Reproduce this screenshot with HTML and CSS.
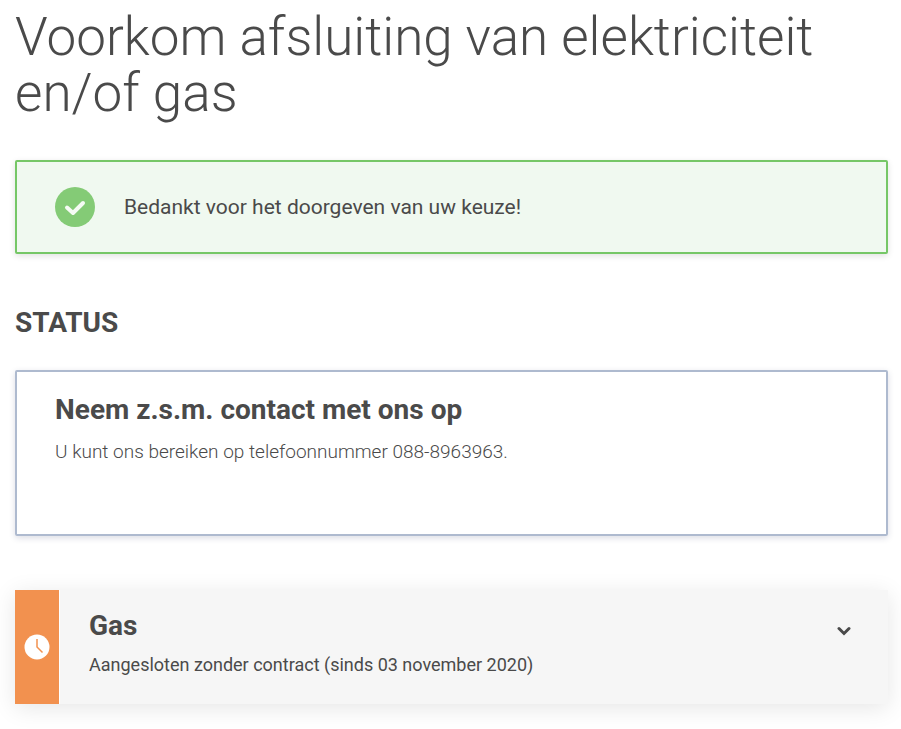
FILE: index.html
```html
<!DOCTYPE html>
<html lang="nl">
<head>
    <meta charset="UTF-8">
    <meta name="viewport" content="width=device-width, initial-scale=1.0">
    <title>Voorkom afsluiting</title>
    <link rel="stylesheet" href="styles.css">
</head>
<body>
    <main class="page">
        <h1 class="page-title">Voorkom afsluiting van elektriciteit en/of gas</h1>

        <div class="alert" role="status">
            <svg class="alert-icon" viewBox="0 0 40 40" aria-hidden="true">
                <circle cx="20" cy="20" r="20" fill="#84cb76"/>
                <path d="M12 20.5l6 5.5L28 16" fill="none" stroke="#f5fbf4" stroke-width="4" stroke-linecap="round" stroke-linejoin="round"/>
            </svg>
            <p class="alert-text">Bedankt voor het doorgeven van uw keuze!</p>
        </div>

        <h2 class="section-title">STATUS</h2>

        <section class="card">
            <h3 class="card-title">Neem z.s.m. contact met ons op</h3>
            <p class="card-text">U kunt ons bereiken op telefoonnummer 088-8963963.</p>
        </section>

        <button class="panel" type="button" aria-expanded="false">
            <span class="panel-status">
                <svg class="clock" viewBox="0 0 26 26" aria-hidden="true">
                    <circle cx="13" cy="13" r="12.5" fill="#fff"/>
                    <path d="M13 5v8l5.5 5.5" fill="none" stroke="#f2914f" stroke-width="1.5"/>
                </svg>
            </span>
            <span class="panel-body">
                <span class="panel-title">Gas</span>
                <span class="panel-text">Aangesloten zonder contract (sinds 03 november 2020)</span>
            </span>
            <svg class="chevron" viewBox="0 0 14 10" aria-hidden="true">
                <path d="M2 2.5l5 5 5-5" fill="none" stroke="#4a4a4a" stroke-width="3" stroke-linecap="round"/>
            </svg>
        </button>
    </main>
</body>
</html>
```
FILE: styles.css
```css
* {
    box-sizing: border-box;
}

body {
    margin: 0;
    background-color: #fff;
    color: #4a4a4a;
    font-family: Roboto, "Liberation Sans", sans-serif;
}

h1, h2, h3, p {
    margin: 0;
}

.page {
    padding: 9px 13px 25px 15px;
}

.page-title {
    font-size: 53px;
    line-height: 56px;
    font-weight: 300;
    margin-bottom: 39px;
}

.alert {
    display: flex;
    align-items: center;
    gap: 29px;
    padding: 25px 38px;
    background-color: #f0f9f0;
    border: 2px solid #76c767;
    border-radius: 2px;
    box-shadow: 0 2px 6px rgba(0, 0, 0, 0.12);
}

.alert-icon {
    width: 40px;
    height: 40px;
}

.alert-text {
    font-size: 21px;
    line-height: 28px;
}

.section-title {
    font-size: 28px;
    line-height: 36px;
    font-weight: 700;
    margin: 51px 0 29px;
}

.card {
    padding: 20px 38px 68px;
    border: 2px solid #aebacf;
    border-radius: 2px;
    box-shadow: 0 2px 6px rgba(30, 40, 90, 0.16);
}

.card-title {
    font-size: 28px;
    line-height: 36px;
    font-weight: 700;
    margin-bottom: 10px;
}

.card-text {
    font-size: 19px;
    line-height: 28px;
    font-weight: 300;
}

.panel {
    display: flex;
    width: 100%;
    margin-top: 54px;
    padding: 0;
    border: none;
    background-color: #f6f6f6;
    box-shadow: 0 4px 22px rgba(0, 0, 0, 0.1);
    color: inherit;
    font-family: inherit;
    text-align: left;
    cursor: pointer;
}

.panel-status {
    display: flex;
    align-self: stretch;
    align-items: center;
    justify-content: center;
    width: 45px;
    background-color: #f2914f;
    border-right: 1px solid #fff;
}

.clock {
    width: 26px;
    height: 26px;
}

.panel-body {
    flex: 1;
    padding: 18px 29px 25px;
}

.panel-title {
    display: block;
    font-size: 28px;
    line-height: 36px;
    font-weight: 700;
    margin-bottom: 7px;
}

.panel-text {
    display: block;
    font-size: 18px;
    line-height: 28px;
}

.chevron {
    width: 14px;
    height: 10px;
    margin: 36px 37px 0 0;
}
```
